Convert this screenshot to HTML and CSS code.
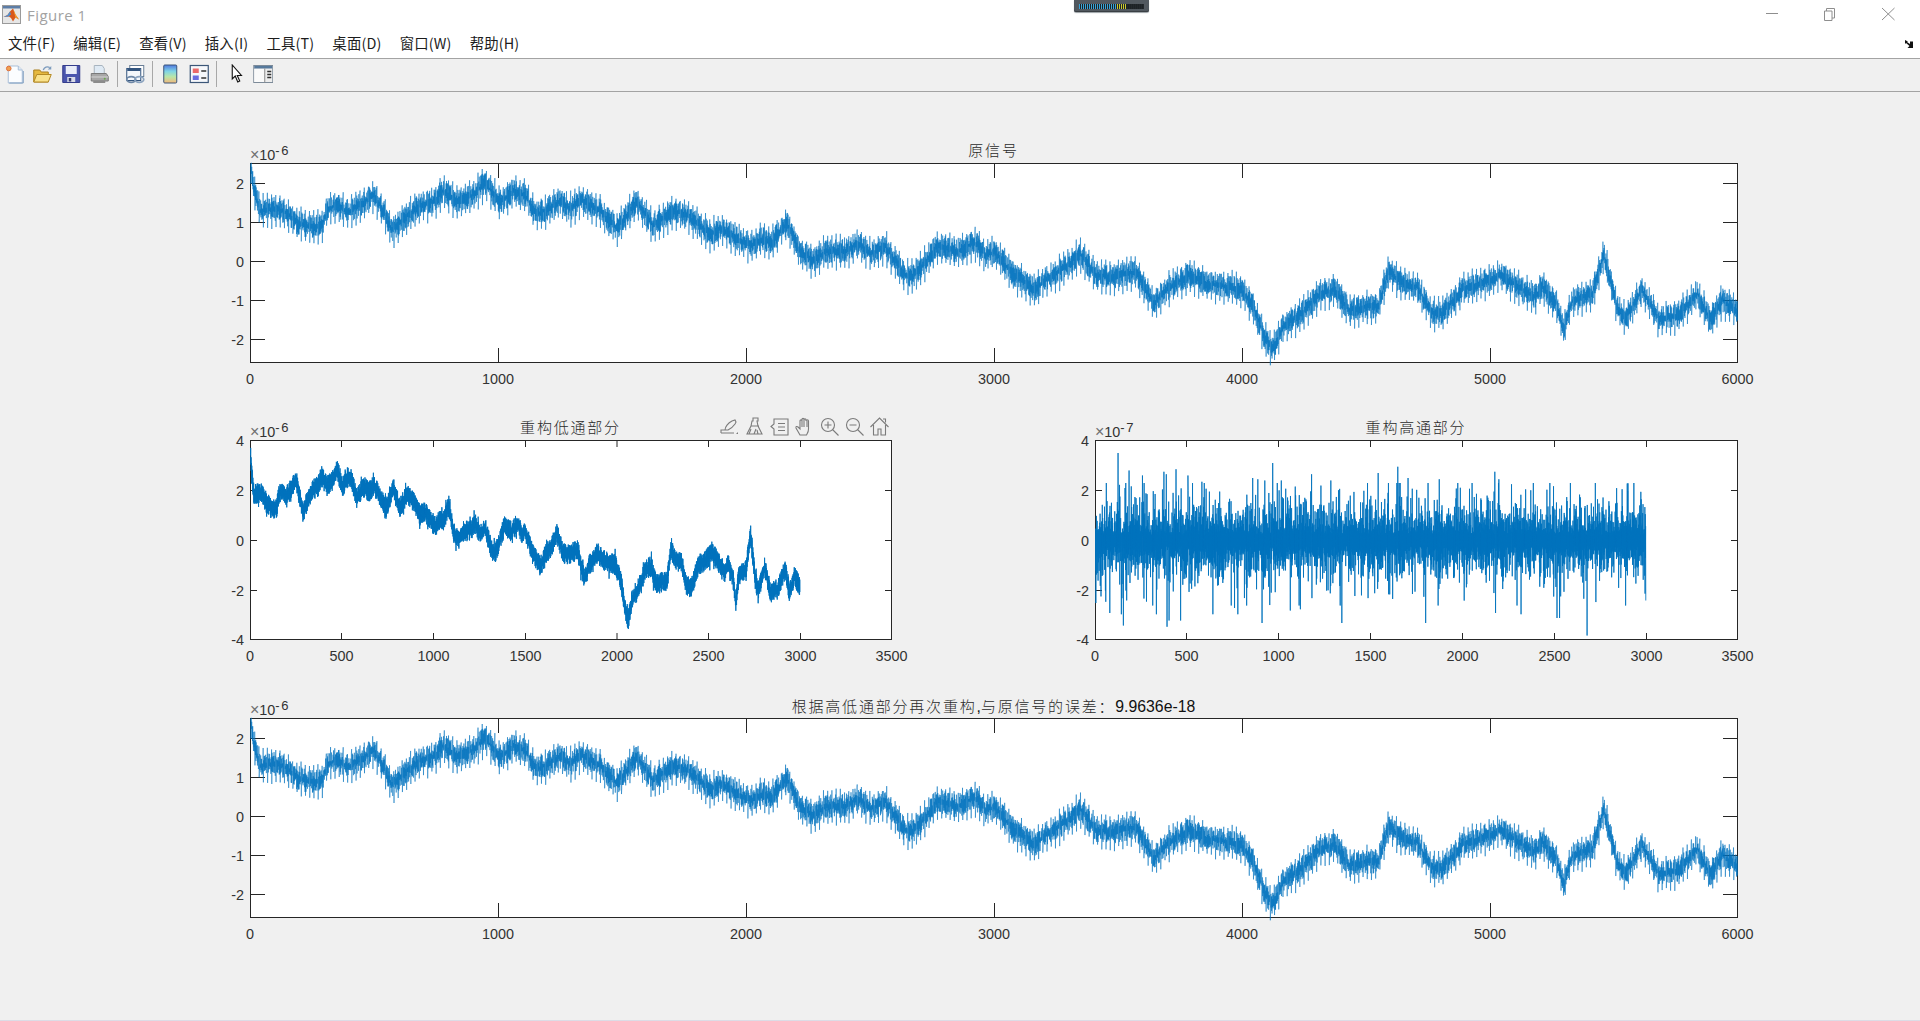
FILE: index.html
```html
<!DOCTYPE html>
<html lang="zh-CN">
<head>
<meta charset="utf-8">
<title>Figure 1</title>
<link rel="stylesheet" href="styles.css">
</head>
<body>
<div class="meter"><div class="meter-bar"></div></div>
<header class="titlebar">
  <div class="title-left">
    <svg class="app-icon" viewBox="0 0 19 19">
      <rect x="0.5" y="0.5" width="18" height="18" fill="#e6e6e6" stroke="#9a9a9a"/>
      <rect x="1" y="1" width="17" height="2.5" fill="#5c7da6"/>
      <path d="M1.5 12l4-2 2.5-3.5L11 3.5l2.5 6 3.5 5-3.5-2-2.5 4-2-3.5-2-1.5z" fill="#d9581c"/>
      <path d="M1.5 12l4-2 2.5-3.5 1 3-2.5 2z" fill="#4f8fd0"/>
      <path d="M11 3.5l2.5 6 3.5 5-3.5-2z" fill="#f0a030"/>
    </svg>
    <span class="title-text">Figure 1</span>
  </div>
  <div class="win-buttons">
    <svg class="win-icon" viewBox="0 0 58 29"><path d="M23 13.5h12" class="win-line"/></svg>
    <svg class="win-icon" viewBox="0 0 58 29"><path d="M23.5 11h7.500v9.500h-7.500zM25.500 11V8.500h8v9.500H31" class="win-line"/></svg>
    <svg class="win-icon" viewBox="0 0 58 29"><path d="M23 8l12.500 12M35.500 8L23 20" class="win-line"/></svg>
  </div>
</header>
<nav class="menubar">
  <span>文件(F)</span><span>编辑(E)</span><span>查看(V)</span><span>插入(I)</span><span>工具(T)</span><span>桌面(D)</span><span>窗口(W)</span><span>帮助(H)</span>
  <svg class="dock-arrow" viewBox="0 0 10 10"><path d="M1 1l3 1.500L3 3l3 2V2.500h3V9H3.500L5.500 7 2 4 1 5z" fill="#111"/></svg>
</nav>
<div class="toolbar">
  <div class="tool-group">
    <svg class="tool" viewBox="0 0 20 20"><path d="M4 2h10l4 4v13H4z" fill="#fbfdff" stroke="#a9bfd8"/><path d="M14 2v4h4" fill="#dfe9f4" stroke="#a9bfd8"/><path d="M19 19V7M5 19h14" stroke="#7f9dc0" fill="none"/><circle cx="4.500" cy="4.500" r="2.300" fill="#f0a050" stroke="#e0703a"/></svg>
    <svg class="tool" viewBox="0 0 20 20"><path d="M1.500 6h6l1.500 2h7v10h-14.500z" fill="#e6b93f" stroke="#a97f1e"/><path d="M1.500 18l3-7.500h14.500l-3 7.500z" fill="#f9e28c" stroke="#b58a24"/><path d="M11 6c1-3 4-4 6.500-2.500" fill="none" stroke="#7c9bbd" stroke-width="1.300"/><path d="M19 2v3.500h-3.500z" fill="#7c9bbd"/></svg>
    <svg class="tool" viewBox="0 0 20 20"><path d="M1.500 1.500h17v17h-17z" fill="#4a55ad" stroke="#343d8c"/><rect x="4.500" y="2" width="11" height="8" fill="#e9edf8"/><rect x="6" y="13" width="8" height="5" fill="#d8dbe8"/><rect x="7.500" y="14" width="2.500" height="3.500" fill="#333a70"/></svg>
    <svg class="tool" viewBox="0 0 20 20"><path d="M5 1.500h8l2 3v5H5z" fill="#dfeaf4" stroke="#a8b4bf"/><path d="M2 9.500h15l2 3v4.500H2z" fill="#a7a7a7" stroke="#7a7a7a"/><path d="M2 13h17" stroke="#d4d4d4"/><path d="M4 17h12v2H4z" fill="#8c8c8c"/><circle cx="15.500" cy="14.800" r="1" fill="#6aa84f"/></svg>
  </div>
  <i class="tool-sep"></i>
  <div class="tool-group">
    <svg class="tool" viewBox="0 0 20 20"><rect x="4.500" y="1.500" width="14" height="11" fill="#fff" stroke="#6a7f97"/><rect x="1.500" y="4.500" width="14" height="12" fill="#f4f7fb" stroke="#33557f"/><path d="M2 5h13v2H2z" fill="#33557f"/><ellipse cx="6" cy="15.500" rx="4.500" ry="2.800" fill="none" stroke="#6d87a6" stroke-width="1.700"/><ellipse cx="14" cy="15.500" rx="4.500" ry="2.800" fill="none" stroke="#8ba3bf" stroke-width="1.700"/></svg>
  </div>
  <i class="tool-sep"></i>
  <div class="tool-group">
    <svg class="tool" viewBox="0 0 20 20"><defs><linearGradient id="cbar" x1="0" y1="0" x2="0" y2="1"><stop offset="0" stop-color="#4f78e0"/><stop offset=".35" stop-color="#7fd4e6"/><stop offset=".65" stop-color="#b9e6a8"/><stop offset="1" stop-color="#f3b77c"/></linearGradient></defs><rect x="3.500" y="1" width="13" height="18" rx="1" fill="url(#cbar)" stroke="#3b5678"/></svg>
    <svg class="tool" viewBox="0 0 20 20"><rect x="1" y="1.500" width="18" height="17" fill="#f6f8fb" stroke="#3b5678" stroke-width="1.200"/><rect x="3.500" y="4.500" width="6" height="4.500" fill="#ec6a6a"/><rect x="3.500" y="11.500" width="6" height="4.500" fill="#6a6ee0"/><path d="M12 7h5M12 14h5" stroke="#333" stroke-width="1.300"/></svg>
  </div>
  <i class="tool-sep"></i>
  <div class="tool-group">
    <svg class="tool" viewBox="0 0 20 20"><path d="M8 1v14l3-3 2.500 6 2-1-2.500-5.500h4.200z" fill="#fff" stroke="#111" stroke-width="1.100"/></svg>
    <svg class="tool" viewBox="0 0 20 20"><rect x="0.500" y="1.500" width="19" height="17" fill="#ededed" stroke="#7d8b99"/><path d="M1 2h18v2.500H1z" fill="#56799c"/><path d="M1 5h10v13H1z" fill="#fafafa"/><path d="M11.500 4.500v14" stroke="#8c8c8c"/><path d="M14 7.500h4M14 10.500h4M14 13.500h4" stroke="#333" stroke-width="1.400"/></svg>
  </div>
</div>
<main class="figure">
  <section class="axes axes-wide">
    <svg class="plot" width="1488" height="200">
      <text class="axis-title" x="743.500" y="-7">原信号</text>
      <text class="exponent" x="0" y="-3"><tspan class="times">×</tspan>10<tspan class="power" dy="-5">-6</tspan></text>
      <rect class="frame" x="0.500" y="0.500" width="1487" height="199"/>
      <path class="ticks" d="M248.500 1v14M496.500 1v14M744.500 1v14M992.500 1v14M1240.500 1v14M248.500 199v-14M496.500 199v-14M744.500 199v-14M992.500 199v-14M1240.500 199v-14M1 20.500h14M1 59.500h14M1 98.500h14M1 137.500h14M1 176.500h14M1487 20.500h-14M1487 59.500h-14M1487 98.500h-14M1487 137.500h-14M1487 176.500h-14"/>
      <path class="trace trace-full" data-signal="full"/>
      <g class="tick-y">
        <text x="-6" y="25.500">2</text><text x="-6" y="64.500">1</text><text x="-6" y="103.500">0</text><text x="-6" y="142.500">-1</text><text x="-6" y="181.500">-2</text>
      </g>
      <g class="tick-x">
        <text x="0" y="221">0</text><text x="248" y="221">1000</text><text x="496" y="221">2000</text><text x="744" y="221">3000</text><text x="992" y="221">4000</text><text x="1240" y="221">5000</text><text x="1487.500" y="221">6000</text>
      </g>
    </svg>
  </section>

  <section class="axes axes-left">
    <svg class="plot" width="642" height="200">
      <text class="axis-title" x="320.500" y="-7">重构低通部分</text>
      <text class="exponent" x="0" y="-3"><tspan class="times">×</tspan>10<tspan class="power" dy="-5">-6</tspan></text>
      <rect class="frame" x="0.500" y="0.500" width="641" height="199"/>
      <path class="ticks" d="M91.500 1v6M183.500 1v6M275.500 1v6M367 1v6M458.500 1v6M550.500 1v6M91.500 199v-6M183.500 199v-6M275.500 199v-6M367 199v-6M458.500 199v-6M550.500 199v-6M1 50.500h6M1 100.500h6M1 150.500h6M641 50.500h-6M641 100.500h-6M641 150.500h-6"/>
      <path class="trace trace-low" data-signal="low"/>
      <g class="tick-y">
        <text x="-6" y="5.500">4</text><text x="-6" y="55.500">2</text><text x="-6" y="105.500">0</text><text x="-6" y="155.500">-2</text><text x="-6" y="204.500">-4</text>
      </g>
      <g class="tick-x">
        <text x="0" y="221">0</text><text x="91.500" y="221">500</text><text x="183.500" y="221">1000</text><text x="275.500" y="221">1500</text><text x="367" y="221">2000</text><text x="458.500" y="221">2500</text><text x="550.500" y="221">3000</text><text x="641.500" y="221">3500</text>
      </g>
    </svg>
    <div class="axes-tools">
      <svg class="hover-tool" viewBox="0 0 19 19"><path d="M1 16h13M1 16v-3h4M5 13c0-3 3-7 7-9l3-1 1 2-1 2c-2 3-5 5-7 6z" /><path d="M16 17l2-2v2z" class="solid"/></svg>
      <svg class="hover-tool" viewBox="0 0 19 19"><path d="M8 1h5v3h-1l1 5 4 8H2l4-8 1-5H8zM6 9h8M9 17l2-5M13 17l-1-4M4 17l2-5"/></svg>
      <svg class="hover-tool" viewBox="0 0 19 19"><path d="M4 2h14v16H4V12L1 9.500 4 7zM8 6.500h7M8 10h7M8 13.500h7"/></svg>
      <svg class="hover-tool" viewBox="0 0 19 19"><path d="M5 18l-4-7c-.5-1.500 1-2 2-1l2 2V4c0-1.500 2-1.500 2 0V2.500c0-1.500 2-1.500 2 0V3c0-1.500 2-1.500 2 0v1c0-1.500 2.500-1.500 2.500 0v8c0 3-1 4-2 6zM7 4v6M9 3v7M12 4v6"/></svg>
      <svg class="hover-tool" viewBox="0 0 19 19"><circle cx="8" cy="8" r="6.500"/><path d="M12.500 12.500l6 6M8 4.500v7M4.500 8h7"/></svg>
      <svg class="hover-tool" viewBox="0 0 19 19"><circle cx="8" cy="8" r="6.500"/><path d="M12.500 12.500l6 6M4.500 8h7"/></svg>
      <svg class="hover-tool" viewBox="0 0 19 19"><path d="M.5 10L9.500 1l9 9M3.500 8v10h4.500v-6h3v6h4.500V8M13 2h2.500v3.500"/></svg>
    </div>
  </section>

  <section class="axes axes-right">
    <svg class="plot" width="643" height="200">
      <text class="axis-title" x="321" y="-7">重构高通部分</text>
      <text class="exponent" x="0" y="-3"><tspan class="times">×</tspan>10<tspan class="power" dy="-5">-7</tspan></text>
      <rect class="frame" x="0.500" y="0.500" width="642" height="199"/>
      <path class="ticks" d="M91.500 1v6M183.500 1v6M275.500 1v6M367.500 1v6M459.500 1v6M551.500 1v6M91.500 199v-6M183.500 199v-6M275.500 199v-6M367.500 199v-6M459.500 199v-6M551.500 199v-6M1 50.500h6M1 100.500h6M1 150.500h6M642 50.500h-6M642 100.500h-6M642 150.500h-6"/>
      <path class="trace trace-high" data-signal="high"/>
      <g class="tick-y">
        <text x="-6" y="5.500">4</text><text x="-6" y="55.500">2</text><text x="-6" y="105.500">0</text><text x="-6" y="155.500">-2</text><text x="-6" y="204.500">-4</text>
      </g>
      <g class="tick-x">
        <text x="0" y="221">0</text><text x="91.500" y="221">500</text><text x="183.500" y="221">1000</text><text x="275.500" y="221">1500</text><text x="367.500" y="221">2000</text><text x="459.500" y="221">2500</text><text x="551.500" y="221">3000</text><text x="642.500" y="221">3500</text>
      </g>
    </svg>
  </section>

  <section class="axes axes-wide axes-last">
    <svg class="plot" width="1488" height="200">
      <text class="axis-title" x="743.500" y="-6">根据高低通部分再次重构<tspan class="latin">,</tspan>与原信号的误差：<tspan class="latin">9.9636e-18</tspan></text>
      <text class="exponent" x="0" y="-3"><tspan class="times">×</tspan>10<tspan class="power" dy="-5">-6</tspan></text>
      <rect class="frame" x="0.500" y="0.500" width="1487" height="199"/>
      <path class="ticks" d="M248.500 1v14M496.500 1v14M744.500 1v14M992.500 1v14M1240.500 1v14M248.500 199v-14M496.500 199v-14M744.500 199v-14M992.500 199v-14M1240.500 199v-14M1 20.500h14M1 59.500h14M1 98.500h14M1 137.500h14M1 176.500h14M1487 20.500h-14M1487 59.500h-14M1487 98.500h-14M1487 137.500h-14M1487 176.500h-14"/>
      <path class="trace trace-full" data-signal="full"/>
      <g class="tick-y">
        <text x="-6" y="25.500">2</text><text x="-6" y="64.500">1</text><text x="-6" y="103.500">0</text><text x="-6" y="142.500">-1</text><text x="-6" y="181.500">-2</text>
      </g>
      <g class="tick-x">
        <text x="0" y="221">0</text><text x="248" y="221">1000</text><text x="496" y="221">2000</text><text x="744" y="221">3000</text><text x="992" y="221">4000</text><text x="1240" y="221">5000</text><text x="1487.500" y="221">6000</text>
      </g>
    </svg>
  </section>
</main>
<script src="plots.js"></script>
</body>
</html>
```

FILE: styles.css
```css
* { box-sizing: border-box; }
html, body { margin: 0; height: 100%; }
body {
  position: relative;
  height: 1021px;
  overflow: hidden;
  background: #f0f0f0;
  border-bottom: 1px solid #dcdce6;
  font-family: "Liberation Sans", "Noto Sans CJK SC", sans-serif;
  color: #262626;
}

.meter {
  position: absolute;
  left: 1074px;
  top: 0;
  width: 75px;
  height: 12px;
  padding: 4px 5px 3px;
  background: #51585f;
  border-radius: 0 0 2px 2px;
  box-shadow: inset 0 -1px 0 #3a3f44, 0 1px 1px #9aa0a5;
}
.meter-bar {
  height: 5px;
  background:
    repeating-linear-gradient(90deg, transparent 0 1px, #1d2226 1px 2px),
    linear-gradient(90deg, #3aa5d8 0 58%, #c9c92f 58% 72%, #23282c 72% 100%);
}

.titlebar {
  display: flex;
  justify-content: space-between;
  height: 29px;
  background: #fff;
}
.title-left { display: flex; align-items: center; gap: 6px; padding-left: 2px; }
.app-icon { width: 19px; height: 19px; margin-top: -1px; }
.title-text { font: 15px "Open Sans", "Noto Sans", sans-serif; color: #a2a2a2; letter-spacing: .45px; }
.win-buttons { display: flex; padding-right: 3.5px; }
.win-icon { width: 58px; height: 29px; display: block; }
.win-line { fill: none; stroke: #8e8e8e; stroke-width: 1; }

.menubar {
  position: relative;
  display: flex;
  align-items: center;
  gap: 18.1px;
  height: 30px;
  padding: 0 0 3px 8px;
  background: #fff;
  border-bottom: 1px solid #a3a3a3;
  font: 14.4px "Noto Sans CJK SC", "Noto Sans", sans-serif;
  letter-spacing: .15px;
  color: #1c1c1c;
}
.dock-arrow { position: absolute; right: 6px; top: 10px; width: 10px; height: 10px; }

.toolbar {
  display: flex;
  align-items: center;
  gap: 7px;
  height: 33px;
  padding: 0 0 2px 3.5px;
  border-bottom: 1px solid #a3a3a3;
}
.tool-group { display: flex; gap: 8px; }
.tool { width: 20.5px; height: 20px; display: block; }
.tool-sep { width: 1px; height: 26px; background: #a8a8a8; }

.figure {
  display: grid;
  grid-template-columns: 642px 203px 643px;
  grid-template-rows: 200px 200px 200px;
  row-gap: 77px;
  padding: 71px 0 0 250px;
}
.axes { position: relative; }
.axes-wide { grid-column: 1 / -1; }
.axes-left { grid-column: 1; }
.axes-right { grid-column: 3; }
.axes-last { margin-top: 1px; }

.plot { display: block; overflow: visible; }
.frame { fill: #fff; stroke: #262626; stroke-width: 1; }
.ticks { fill: none; stroke: #262626; stroke-width: 1; }
.trace { fill: none; stroke: #0072bd; stroke-linejoin: bevel; }
.trace-full { stroke-width: .54; }
.trace-low { stroke-width: .95; }
.trace-high { stroke-width: .85; }

.tick-x text, .tick-y text, .exponent { font: 14.4px "Liberation Sans", sans-serif; fill: #333; }
.tick-x text { text-anchor: middle; }
.tick-y text { text-anchor: end; }
.exponent .times { fill: #6f6f6f; font-size: 16px; }
.exponent .power { font-size: 13px; letter-spacing: 1.5px; }
.axis-title {
  font: 15px "Noto Sans CJK SC", "Liberation Sans", sans-serif;
  font-weight: 300;
  letter-spacing: 1.8px;
  text-anchor: middle;
  fill: #2a2a2a;
}
.axis-title .latin { font: 15.800px "Liberation Sans", sans-serif; letter-spacing: 0; fill: #111; }

.axes-tools {
  position: absolute;
  right: 3px;
  top: -23px;
  display: flex;
  gap: 6px;
}
.hover-tool {
  width: 19px;
  height: 19px;
  display: block;
  fill: none;
  stroke: #7b7b7b;
  stroke-width: 1.100;
  overflow: visible;
}
.hover-tool .solid { fill: #7b7b7b; stroke: none; }
```

FILE: plots.js
```js
(function () {
  // Slow component of the measured signal, read from the chart: [sample, value].
  var KEYS = [[0,2.5],[12,1.9],[39,1.3],[106,1.35],[133,1.3],[187,1],[240,.9],[288,.9],[308,1.3],[341,1.45],[395,1.27],[442,1.45],[496,1.7],[536,1.3],[570,.8],[630,1.15],[684,1.45],[738,1.53],[778,1.83],[832,1.53],[886,1.66],[946,2],[1007,1.53],[1060,1.8],[1108,1.7],[1155,1.2],[1249,1.53],[1289,1.36],[1343,1.57],[1410,1.3],[1477,.85],[1558,1.53],[1625,.93],[1712,1.3],[1759,1.19],[1853,.72],[1899,.85],[1986,.5],[2029,.42],[2065,.59],[2101,.5],[2166,.97],[2216,.25],[2274,.03],[2317,.25],[2403,.29],[2454,.46],[2504,.2],[2562,.38],[2641,-.35],[2677,-.35],[2735,.08],[2771,.42],[2850,.25],[2922,.5],[2965,.16],[3001,.25],[3081,-.35],[3167,-.73],[3210,-.44],[3282,-.18],[3347,.2],[3412,-.35],[3484,-.39],[3571,-.26],[3643,-1.08],[3700,-.69],[3787,-.35],[3859,-.56],[3989,-.69],[4045,-1.12],[4088,-1.89],[4124,-2.27],[4167,-1.68],[4232,-1.38],[4318,-.82],[4376,-.73],[4434,-1.25],[4506,-1.16],[4549,-1.16],[4592,-.26],[4650,-.56],[4707,-.65],[4765,-1.29],[4808,-1.33],[4895,-.69],[4967,-.56],[5046,-.35],[5125,-.69],[5183,-.9],[5212,-.65],[5270,-1.08],[5298,-1.76],[5334,-.99],[5414,-.82],[5460,.2],[5514,-1.16],[5550,-1.42],[5615,-.73],[5680,-1.46],[5759,-1.38],[5838,-.82],[5889,-1.5],[5939,-.99],[6000,-1.29]];

  var HIGH_SPIKES = [[123,3.5],[183,2.8],[256,2.6],[373,2.75],[386,2.65],[439,2.85],[504,2.6],[580,2.35],[593,2.3],[857,2.5],[885,2.45],[923,2.4],[966,3.1],[1013,2.4],[1178,2.65],[1283,2.4],[1541,2.7],[1648,2.95],[1704,2.5],[1874,2.45],[2177,2.75],[2199,2.45],[2268,2.25],[2,-2.5],[56,-2.45],[78,-2.9],[141,-2.95],[152,-3.4],[332,-2.95],[390,-3.45],[401,-3.2],[464,-3.2],[640,-2.95],[758,-2.7],[776,-2.95],[908,-3.3],[1062,-2.8],[1117,-2.75],[1343,-3.3],[1800,-3.3],[2181,-2.9],[2320,-2.95],[2516,-3.1],[2530,-3.1],[2680,-3.8]];

  function rng(seed) {
    return function () {
      seed = (seed + 0x6D2B79F5) | 0;
      var t = Math.imul(seed ^ (seed >>> 15), 1 | seed);
      t = (t + Math.imul(t ^ (t >>> 7), 61 | t)) ^ t;
      return ((t ^ (t >>> 14)) >>> 0) / 4294967296;
    };
  }
  function gauss(r) {
    return Math.sqrt(-2 * Math.log(r() + 1e-9)) * Math.cos(6.2832 * r());
  }
  function slow(t) {
    var lo = 0, hi = KEYS.length - 1;
    while (hi - lo > 1) {
      var m = (lo + hi) >> 1;
      if (KEYS[m][0] <= t) lo = m; else hi = m;
    }
    var a = KEYS[lo], b = KEYS[hi];
    return a[1] + (b[1] - a[1]) * (t - a[0]) / (b[0] - a[0]);
  }

  function fullSignal() {
    var r = rng(11), out = [];
    for (var i = 0; i <= 6000; i++) {
      var alt = i % 2 ? 1 : -1;
      var v = slow(i) + alt * (0.03 + 0.28 * r());
      var ph = i % 17;
      if (ph === 0) v = slow(i) + 0.30 + r() * 0.15;
      if (ph === 1) v = slow(i) - 0.36 - r() * 0.16;
      out.push([i, i === 0 ? 2.5 : v]);
    }
    return { pts: out, sx: 1487 / 6000, ox: 0.5, sy: 39, oy: 98.5 };
  }
  function lowSignal() {
    var r = rng(23), out = [];
    for (var i = 0; i <= 3000; i++) {
      var alt = i % 2 ? 1 : -1;
      var v = 1.414 * slow(2 * i) + alt * (0.12 + 0.3 * r());
      if (i % 11 === 0) v += (r() - 0.5) * 0.55;
      out.push([i, i === 0 ? 3.4 : v]);
    }
    return { pts: out, sx: 641 / 3500, ox: 0.5, sy: 25, oy: 100.5 };
  }
  function highSignal() {
    var r = rng(37), out = [], spikes = {};
    HIGH_SPIKES.forEach(function (s) { spikes[s[0]] = s[1]; });
    for (var i = 0; i <= 3000; i++) {
      var alt = i % 2 ? 1 : -1;
      var v = alt * (0.22 + Math.abs(gauss(r)) * 0.55);
      if (r() < 0.14) v = alt * (1 + Math.abs(gauss(r)) * 0.8);
      v = Math.max(-2.6, Math.min(2.3, v));
      if (spikes[i] !== undefined) v = spikes[i];
      out.push([i, v]);
    }
    return { pts: out, sx: 642 / 3500, ox: 0.5, sy: 25, oy: 100.5 };
  }

  function toPath(sig) {
    return sig.pts.map(function (p, i) {
      return (i ? "L" : "M") + (sig.ox + p[0] * sig.sx).toFixed(2) + " " + (sig.oy - p[1] * sig.sy).toFixed(2);
    }).join("");
  }

  var makers = { full: fullSignal, low: lowSignal, high: highSignal };
  document.querySelectorAll("[data-signal]").forEach(function (el) {
    el.setAttribute("d", toPath(makers[el.dataset.signal]()));
  });
})();
```
